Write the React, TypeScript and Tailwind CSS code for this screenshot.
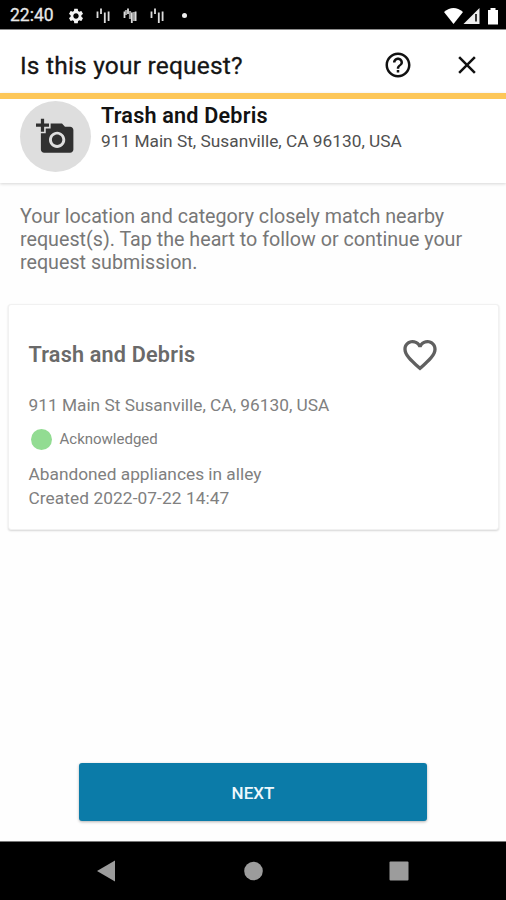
import { MdAddAPhoto, MdClose, MdFavoriteBorder, MdHelpOutline, MdSettings } from "react-icons/md";

const request = {
  title: "Trash and Debris",
  address: "911 Main St Susanville, CA, 96130, USA",
  status: "Acknowledged",
  description: "Abandoned appliances in alley",
  created: "Created 2022-07-22 14:47",
};

const BarsIcon = ({ dense = false }: { dense?: boolean }) => (
  <svg width="14" height="18" viewBox="0 0 14 18" fill="none" stroke="#dcdcdc" strokeWidth="1.8">
    {dense && <path d="M3 3v5M7 4v8M10.800 5v9" stroke="#999999" strokeWidth="2.200" />}
    <path d="M1.500 4.500v6.500M5 1.500v5.500M8.800 5.500v10.500M12.600 4.500v9.500" />
  </svg>
);

const StatusBar = () => (
  <div className="flex h-[30px] shrink-0 items-center border-b border-[#8c8c8c] bg-black pr-[7px] pl-[10px] pt-[2px]">
    <span className="w-[57px] text-[17.5px] text-[#e8e8e8] [-webkit-text-stroke:0.3px_#e8e8e8]">22:40</span>
    <MdSettings className="size-[18px] text-[#f2f2f2]" />
    <div className="ml-[11px] flex gap-[13px]">
      <BarsIcon />
      <BarsIcon dense />
      <BarsIcon />
    </div>
    <span className="ml-[18px] size-[5px] rounded-full bg-[#eeeeee]" />
    <svg className="ml-auto" width="55" height="18" viewBox="0 0 55 18">
      <path d="M0 5Q9.500-3 19 5L9.500 17Z" fill="#fff" />
      <path d="M19.500 17 35.500 1v16Z" fill="#eee" />
      <path d="M32 7v7.500" stroke="#222" strokeWidth="1.800" />
      <path d="M46.500 1h5v2h2.500v14.500H44V3h2.500Z" fill="#fff" />
    </svg>
  </div>
);

const Header = () => (
  <header className="flex h-[63px] shrink-0 items-center bg-white pr-6 pl-[20px]">
    <h1 className="mt-[8px] text-[24.5px] leading-7 tracking-[0.2px] text-[#151515] [-webkit-text-stroke:0.3px_#151515]">
      Is this your request?
    </h1>
    <button className="mt-[6px] ml-auto" aria-label="Help">
      <MdHelpOutline className="size-[30px] text-[#111111]" />
    </button>
    <button className="mt-[6px] ml-[39px]" aria-label="Close">
      <MdClose className="size-[30px] text-[#111111]" />
    </button>
  </header>
);

const LocationBanner = () => (
  <section className="flex h-[90px] shrink-0 border-t-[6px] border-[#fdc759] bg-white pt-[2px] pl-[20px] shadow-[0_1px_3px_rgba(0,0,0,0.16)]">
    <div className="flex size-[71px] items-center justify-center rounded-full bg-[#dedede]">
      <MdAddAPhoto className="size-[39px] text-[#303030]" />
    </div>
    <div className="ml-[10px]">
      <h2 className="mt-px text-[21.6px] leading-[27px] font-semibold tracking-[0.2px] text-[#121212]">
        Trash and Debris
      </h2>
      <p className="text-[17.3px] leading-6 text-[#505050]">911 Main St, Susanville, CA 96130, USA</p>
    </div>
  </section>
);

const RequestCard = () => (
  <article className="mx-auto mt-[30px] h-[226px] w-[491px] rounded-[3px] border border-[#f1f1f1] bg-white px-[20px] shadow-[0_1px_2px_rgba(0,0,0,0.16)]">
    <div className="flex items-center justify-between pt-[30px] pr-[38px]">
      <h2 className="text-[21.6px] leading-[26px] font-semibold tracking-[0.2px] text-[#6a6a6a]">{request.title}</h2>
      <MdFavoriteBorder className="size-10 text-[#606060]" />
    </div>
    <p className="mt-[18px] text-[17.3px] leading-6 text-[#808080]">{request.address}</p>
    <div className="mt-[11px] flex h-[22px] items-center gap-2">
      <span className="ml-[2px] size-[21px] rounded-full bg-[#92dc92]" />
      <span className="text-[15px] text-[#7c7c7c]">{request.status}</span>
    </div>
    <div className="mt-[12px] text-[17.3px] leading-6 text-[#808080]">
      <p>{request.description}</p>
      <p className="tracking-[0.08px]">{request.created}</p>
    </div>
  </article>
);

const NavigationBar = () => (
  <nav className="h-[59px] shrink-0 border-t border-[#777777] bg-black">
    <svg width="506" height="58" viewBox="0 0 506 58" fill="#9c9c9c">
      <path d="M97 29 115 18.500v21Z" />
      <circle cx="253.500" cy="29" r="9.300" />
      <rect x="389.500" y="19.500" width="19" height="19" rx="1" />
    </svg>
  </nav>
);

export default function App() {
  return (
    <div className="flex h-[900px] w-[506px] flex-col overflow-hidden bg-[#fefefe] font-['Roboto',sans-serif]">
      <StatusBar />
      <Header />
      <LocationBanner />
      <p className="mt-[22px] ml-[20px] text-[19.7px] leading-[23px] text-[#777777]">
        Your location and category closely match nearby
        <br />
        request(s). Tap the heart to follow or continue your
        <br />
        request submission.
      </p>
      <RequestCard />
      <button className="mx-auto mt-auto mb-[20px] h-[58px] w-[348px] shrink-0 rounded-[3px] bg-[#0b7ba8] pt-[3px] text-[17px] font-medium text-[#eef8fc] shadow-[0_1px_3px_rgba(0,0,0,0.3)]">
        NEXT
      </button>
      <NavigationBar />
    </div>
  );
}
